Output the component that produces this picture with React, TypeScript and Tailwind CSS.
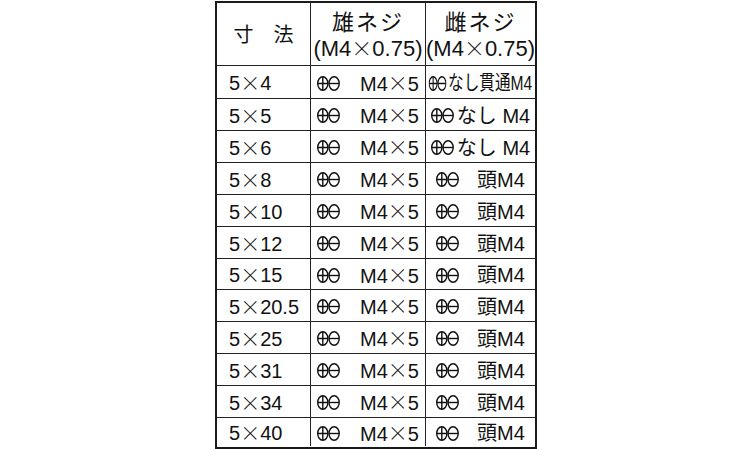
import React from "react";

type Kind = "thru" | "nashi" | "head";

const ROWS: { size: string; kind: Kind; h: string }[] = [
  { size: "4", kind: "thru", h: "h-[33px]" },
  { size: "5", kind: "nashi", h: "h-[32px]" },
  { size: "6", kind: "nashi", h: "h-[32px]" },
  { size: "8", kind: "head", h: "h-[32px]" },
  { size: "10", kind: "head", h: "h-[32px]" },
  { size: "12", kind: "head", h: "h-[32px]" },
  { size: "15", kind: "head", h: "h-[31px]" },
  { size: "20.5", kind: "head", h: "h-[32px]" },
  { size: "25", kind: "head", h: "h-[32px]" },
  { size: "31", kind: "head", h: "h-[32px]" },
  { size: "34", kind: "head", h: "h-[32px]" },
  { size: "40", kind: "head", h: "h-[29px]" },
];

// wide, thin multiplication sign, as in a Japanese font
function Mul({ wide }: { wide?: boolean }) {
  return (
    <span
      className={
        wide
          ? "inline-block w-[21px] text-center font-['Noto_Sans_CJK_JP',sans-serif] text-[21px] font-light"
          : "inline-block w-[20px] text-center font-['Noto_Sans_CJK_JP',sans-serif] text-[20px] font-light"
      }
    >
      ×
    </span>
  );
}

// Phillips + slotted head marks
function Heads() {
  return (
    <svg width="23" height="15" viewBox="0 0 23 15" className="shrink-0">
      <g fill="none" stroke="#111" strokeWidth="1.4">
        <ellipse cx="5.8" cy="7.5" rx="5.1" ry="6.7" />
        <path d="M5.8 0.8V14.2M0.7 7.5H10.9" />
        <ellipse cx="17.1" cy="7.5" rx="5.1" ry="6.7" />
        <path d="M12 7.5H22.2" />
      </g>
    </svg>
  );
}

function Female({ kind }: { kind: Kind }) {
  if (kind === "thru") {
    return (
      <span className="inline-flex shrink-0 scale-x-[0.78] items-center whitespace-nowrap">
        <Heads />
        <span className="ml-[2px]">なし貫通M4</span>
      </span>
    );
  }
  if (kind === "nashi") {
    return (
      <span className="inline-flex items-center whitespace-nowrap">
        <Heads />
        <span className="ml-[3px]">なし M4</span>
      </span>
    );
  }
  return (
    <span className="inline-flex items-center whitespace-nowrap">
      <Heads />
      <span className="ml-[18px]">頭M4</span>
    </span>
  );
}

function HeadCell({ label }: { label: string }) {
  return (
    <>
      <span className="block h-[25px] font-['Noto_Sans_CJK_JP',sans-serif] text-[22px] leading-[25px] tracking-[2px]">
        {label}
      </span>
      <span className="block h-[25px] text-[22px] leading-[25px] whitespace-nowrap">
        (M4<Mul wide />0.75)
      </span>
    </>
  );
}

export default function App() {
  return (
    <div className="flex h-[450px] w-full justify-center bg-white pt-px pl-[2px]">
      <div className="h-[448px] w-[322px] border-2 border-[#1a1a1a] font-['Liberation_Sans','Noto_Sans_CJK_JP',sans-serif] text-[20px] leading-none text-[#111]">
        {/* header */}
        <div className="flex h-[62px]">
          <div className="flex w-[94px] shrink-0 items-center justify-center border-r border-[#222] font-['Noto_Sans_CJK_JP',sans-serif] text-[20px]">
            寸　法
          </div>
          <div className="flex w-[115px] shrink-0 flex-col items-center justify-center gap-[2px] border-r border-[#222]">
            <HeadCell label="雄ネジ" />
          </div>
          <div className="flex min-w-0 flex-1 flex-col items-center justify-center gap-[2px]">
            <HeadCell label="雌ネジ" />
          </div>
        </div>

        {ROWS.map((r) => (
          <div key={r.size} className={`flex border-t border-[#222] ${r.h}`}>
            <div className="flex w-[94px] shrink-0 items-center border-r border-[#222] pt-[2px] pl-[12px]">
              5<Mul />
              {r.size}
            </div>
            <div className="flex w-[115px] shrink-0 items-center justify-center border-r border-[#222] pt-[2px]">
              <Heads />
              <span className="ml-[20px] whitespace-nowrap">
                M4<Mul />5
              </span>
            </div>
            <div className="flex min-w-0 flex-1 items-center justify-center pt-[2px]">
              <Female kind={r.kind} />
            </div>
          </div>
        ))}
      </div>
    </div>
  );
}
